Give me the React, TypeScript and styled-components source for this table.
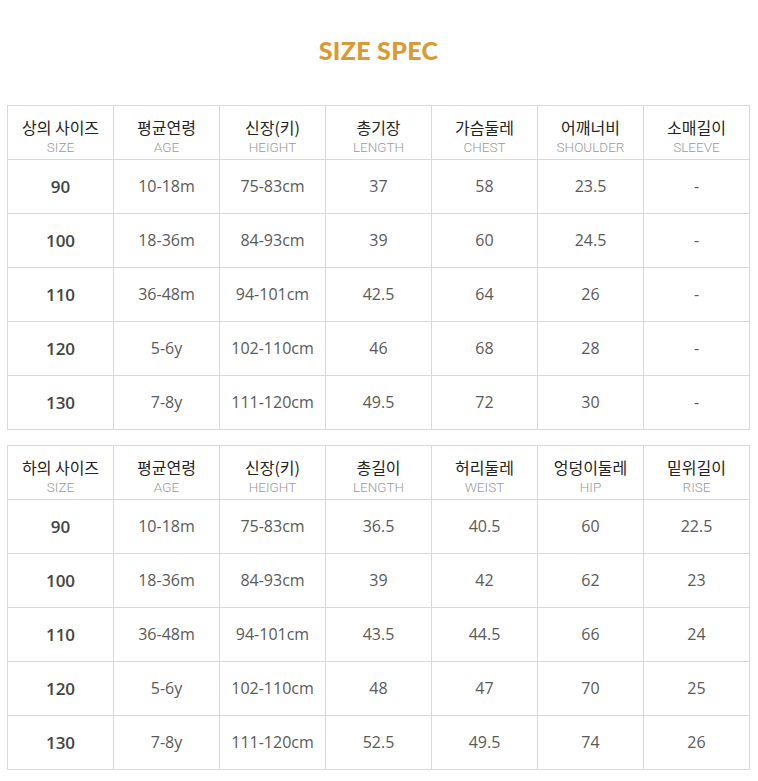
import styled, { createGlobalStyle } from "styled-components";

const GlobalStyle = createGlobalStyle`
  html, body {
    margin: 0;
    padding: 0;
    background: #ffffff;
  }
  body {
    font-family: "Open Sans", "Noto Sans CJK KR", sans-serif;
  }
`;

const Page = styled.div`
  width: 758px;
  padding: 0 8px 0 7px;
  box-sizing: border-box;
`;

const Title = styled.h1`
  margin: 0;
  padding-top: 34px;
  height: 105px;
  box-sizing: border-box;
  text-align: center;
  font-family: "Lato", "Noto Sans", sans-serif;
  font-weight: 900;
  font-size: 25px;
  line-height: 32px;
  letter-spacing: 0.3px;
  color: #d99a34;
`;

const Table = styled.div`
  display: grid;
  grid-template-columns: repeat(7, 1fr);
  grid-auto-rows: 54px;
  border-top: 1px solid #d9d9d9;
  border-left: 1px solid #d9d9d9;
  width: 743px;
  box-sizing: border-box;
  & + & {
    margin-top: 15px;
  }
`;

const Cell = styled.div<{ $bold?: boolean }>`
  display: flex;
  flex-direction: column;
  align-items: center;
  justify-content: center;
  border-right: 1px solid #d9d9d9;
  border-bottom: 1px solid #d9d9d9;
  font-family: "Open Sans", "Noto Sans CJK KR", sans-serif;
  font-size: ${(p) => (p.$bold ? "17px" : "16px")};
  font-weight: ${(p) => (p.$bold ? 600 : 400)};
  color: ${(p) => (p.$bold ? "#444" : "#5a5a5a")};
  padding-bottom: 1px;
`;

const HeadCell = styled(Cell)`
  justify-content: flex-start;
  padding-top: 10px;
  padding-bottom: 0;
`;

const HeadKo = styled.span`
  font-family: "Noto Sans CJK KR", sans-serif;
  font-size: 16px;
  line-height: 23px;
  color: #222;
`;

const HeadEn = styled.span`
  font-family: "Roboto", "Noto Sans", sans-serif;
  font-weight: 300;
  font-size: 13.5px;
  line-height: 16px;
  color: #9a9a9a;
`;

type Head = [string, string];

const topHead: Head[] = [
  ["상의 사이즈", "SIZE"],
  ["평균연령", "AGE"],
  ["신장(키)", "HEIGHT"],
  ["총기장", "LENGTH"],
  ["가슴둘레", "CHEST"],
  ["어깨너비", "SHOULDER"],
  ["소매길이", "SLEEVE"],
];

const topRows = [
  ["90", "10-18m", "75-83cm", "37", "58", "23.5", "-"],
  ["100", "18-36m", "84-93cm", "39", "60", "24.5", "-"],
  ["110", "36-48m", "94-101cm", "42.5", "64", "26", "-"],
  ["120", "5-6y", "102-110cm", "46", "68", "28", "-"],
  ["130", "7-8y", "111-120cm", "49.5", "72", "30", "-"],
];

const bottomHead: Head[] = [
  ["하의 사이즈", "SIZE"],
  ["평균연령", "AGE"],
  ["신장(키)", "HEIGHT"],
  ["총길이", "LENGTH"],
  ["허리둘레", "WEIST"],
  ["엉덩이둘레", "HIP"],
  ["밑위길이", "RISE"],
];

const bottomRows = [
  ["90", "10-18m", "75-83cm", "36.5", "40.5", "60", "22.5"],
  ["100", "18-36m", "84-93cm", "39", "42", "62", "23"],
  ["110", "36-48m", "94-101cm", "43.5", "44.5", "66", "24"],
  ["120", "5-6y", "102-110cm", "48", "47", "70", "25"],
  ["130", "7-8y", "111-120cm", "52.5", "49.5", "74", "26"],
];

const SpecTable = ({ head, rows }: { head: Head[]; rows: string[][] }) => (
  <Table>
    {head.map(([ko, en]) => (
      <HeadCell key={ko}>
        <HeadKo>{ko}</HeadKo>
        <HeadEn>{en}</HeadEn>
      </HeadCell>
    ))}
    {rows.map((row, r) =>
      row.map((v, c) => (
        <Cell key={`${r}-${c}`} $bold={c === 0}>
          {v}
        </Cell>
      ))
    )}
  </Table>
);

export default function App() {
  return (
    <Page>
      <GlobalStyle />
      <Title>SIZE SPEC</Title>
      <SpecTable head={topHead} rows={topRows} />
      <SpecTable head={bottomHead} rows={bottomRows} />
    </Page>
  );
}
